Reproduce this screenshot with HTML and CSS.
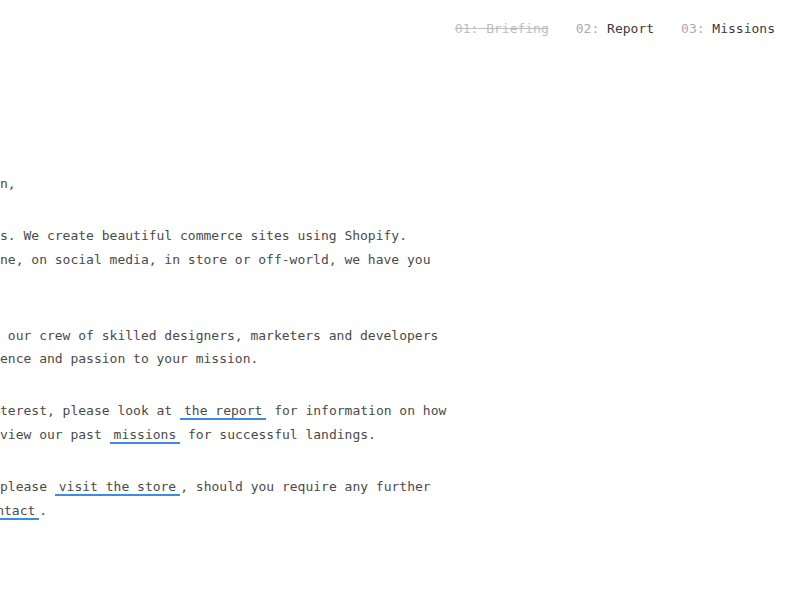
FILE: index.html
```html
<!DOCTYPE html>
<html lang="en">
<head>
<meta charset="utf-8">
<title>Briefing</title>
<link rel="stylesheet" href="styles.css">
</head>
<body>
<header class="top">
  <nav class="steps">
    <a class="step done" href="#briefing"><span class="num">01:</span> Briefing</a>
    <a class="step" href="#report"><span class="num">02:</span> Report</a>
    <a class="step" href="#missions"><span class="num">03:</span> Missions</a>
  </nav>
</header>
<main class="page">
  <article class="letter">
    <p>Greetings Captain,</p>
    <p>We are Astronauts. We create beautiful commerce sites using Shopify.<br>And whether online, on social media, in store or off-world, we have you<br>covered.</p>
    <p>Let us introduce our crew of skilled designers, marketers and developers<br>who bring experience and passion to your mission.</p>
    <p>If this is of interest, please look at <a class="link" href="#report">the report</a> for information on how<br>it works, and review our past <a class="link" href="#missions">missions</a> for successful landings.</p>
    <p>To get started, please <a class="link" href="#store">visit the store</a>, should you require any further<br>help, get in <a class="link" href="#contact">contact</a>.</p>
  </article>
</main>
</body>
</html>
```
FILE: styles.css
```css
html, body {
  margin: 0;
  padding: 0;
  background: #ffffff;
}
body {
  font-family: "DejaVu Sans Mono", "Liberation Mono", monospace;
  font-size: 13px;
  color: #4a4a4a;
  overflow-x: hidden;
}
.top {
  display: flex;
  justify-content: flex-end;
  padding: 19px 25px 0 0;
}
.steps {
  display: flex;
  gap: 27px;
  line-height: 20px;
}
.step {
  color: #3a3a3a;
  text-decoration: none;
  white-space: nowrap;
}
.step .num {
  color: #aaaaaa;
}
.step.done,
.step.done .num {
  color: #bdbdbd;
  text-decoration: line-through;
}
.page {
  padding-top: 133px;
}
.letter {
  margin-left: -16ch;
  white-space: nowrap;
}
.letter p {
  margin: 0 0 29px;
  line-height: 23.4px;
}
.link {
  color: #4a4a4a;
  text-decoration: none;
  padding: 0 4px;
  border-bottom: 2px solid #3b8de3;
}
```
